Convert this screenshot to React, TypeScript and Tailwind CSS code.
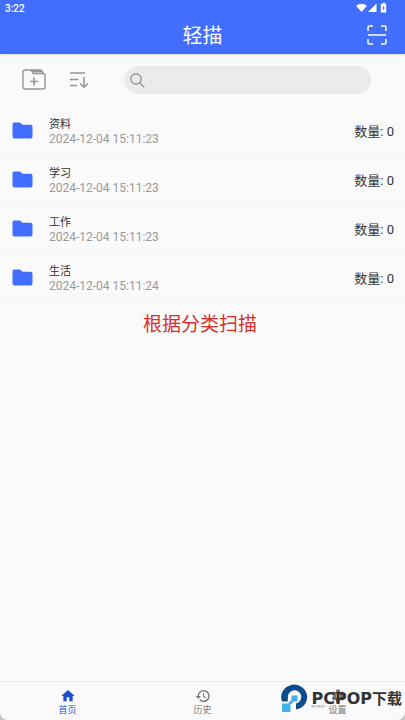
import React from "react";

const folders = [
  { name: "资料", time: "2024-12-04 15:11:23", count: 0 },
  { name: "学习", time: "2024-12-04 15:11:23", count: 0 },
  { name: "工作", time: "2024-12-04 15:11:23", count: 0 },
  { name: "生活", time: "2024-12-04 15:11:24", count: 0 },
];

function StatusIcons() {
  return (
    <svg width="32" height="12" viewBox="0 0 32 12" fill="white" aria-hidden="true">
      <path d="M0 3.800Q5.500-.4 11 3.800L5.500 10z" />
      <path d="M20.500 1.500V10H12z" />
      <path fillRule="evenodd" d="M27 .8h2v1h1.200V10.500h-5.400V1.800H27zM27.900 3.400l-1.700 3h1v2.200l1.700-3h-1z" />
    </svg>
  );
}

function ScanIcon() {
  return (
    <svg width="20" height="20" viewBox="0 0 20 20" fill="none" stroke="white" strokeWidth="1.5" aria-hidden="true">
      <path d="M1 6V2.5Q1 1 2.5 1H6M14 1h3.5Q19 1 19 2.5V6M19 14v3.5q0 1.5-1.5 1.5H14M6 19H2.500Q1 19 1 17.500V14M1 10h18" />
    </svg>
  );
}

function NewFolderIcon() {
  return (
    <svg width="24" height="22" viewBox="0 0 24 22" fill="none" stroke="#949494" strokeWidth="1.4" strokeLinecap="round" strokeLinejoin="round" aria-hidden="true">
      <path d="M1 3q0-2 2-2h6l2 3.500h10q2 0 2 2V18q0 2-2 2H3q-2 0-2-2zM9 1h9.500q1 0 1.500 1l1.500 2.500M11 2.500h8" />
      <path d="M12 9v7M8.500 12.500h7" strokeWidth="1.600" />
    </svg>
  );
}

function SortIcon() {
  return (
    <svg width="20" height="18" viewBox="0 0 20 18" fill="none" stroke="#949494" strokeWidth="1.500" aria-hidden="true">
      <path d="M0 2h15M0 8.500h8.500M0 14.500h7M14 6v10M10 12.500l4 3.700 4-3.700" />
    </svg>
  );
}

function FolderIcon() {
  return (
    <svg className="shrink-0" width="21" height="18" viewBox="0 0 21 18" fill="#426eff" aria-hidden="true">
      <path d="M2 .5h6L10.500 2.700H18.500q2 0 2 2V14.500q0 2-2 2H2.500q-2 0-2-2V2.200Q.5.5 2 .5z" />
    </svg>
  );
}

function GearIcon() {
  return (
    <svg width="16" height="16" viewBox="0 0 24 24" fill="#666" aria-hidden="true">
      <path d="M19.140 12.940c.04-.3.060-.61.060-.94s-.02-.64-.07-.94l2.030-1.580a.49.49 0 0 0 .12-.61l-1.920-3.320a.49.49 0 0 0-.59-.22l-2.390.96a7 7 0 0 0-1.620-.94l-.36-2.540A.48.48 0 0 0 13.920 2.400h-3.840a.48.48 0 0 0-.47.41l-.36 2.540c-.59.24-1.130.57-1.620.94l-2.390-.96a.48.48 0 0 0-.59.220L2.740 8.870a.48.48 0 0 0 .12.610l2.030 1.580a6 6 0 0 0 0 1.880l-2.030 1.580a.49.49 0 0 0-.12.610l1.920 3.320c.12.220.37.290.59.220l2.390-.96c.5.380 1.030.7 1.620.94l.36 2.540c.05.240.24.410.48.410h3.840c.24 0 .44-.17.47-.41l.36-2.540a7 7 0 0 0 1.620-.94l2.390.96c.22.080.47 0 .59-.22l1.920-3.320a.48.48 0 0 0-.12-.61zM12 15.600a3.600 3.600 0 1 1 0-7.200 3.600 3.600 0 0 1 0 7.200z" />
    </svg>
  );
}

function Watermark() {
  return (
    <div className="pointer-events-none absolute right-[3px] bottom-[7px] flex items-start gap-0.5 text-[#333]">
      <svg width="28" height="29" viewBox="0 0 28 29" aria-hidden="true">
        <path d="M1 17.500A13 12.500 0 1 1 15 25.500V19.500A6.700 6.700 0 1 0 7 14.500L6.500 17.500z" fill="#0b4c8c" />
        <path d="M10.500 11.500h6v6h-4L10 20.500H7.500V18.500L10.500 16zM1 19.500h8.500V28H1z" fill="#46aee8" />
      </svg>
      <div className="pt-[5px]">
        <div className="flex items-center leading-5 font-bold">
          <span className="font-['DejaVu_Sans'] text-base leading-5">PCPOP</span>
          <span className="text-[15px] leading-5">下载</span>
        </div>
        <p className="-mt-1 font-['DejaVu_Sans'] text-[4px] leading-[4px] text-[#888]">PCPOP · · · · ·</p>
      </div>
    </div>
  );
}

export default function App() {
  return (
    <div className="min-h-screen bg-[#c4c4c4] font-[Roboto,'Noto_Sans_CJK_SC',sans-serif] text-[#333]">
      <div className="relative flex min-h-screen flex-col overflow-hidden rounded-b-lg bg-[#fafafa]">
        <header className="bg-[#426eff] text-white shadow">
          <div className="flex h-4 items-center justify-between pr-[17px] pl-[5px] text-[10px] font-medium">
            <span>3:22</span>
            <StatusIcons />
          </div>
          <div className="grid h-[38px] grid-cols-3 items-center px-[18px]">
            <h1 className="col-start-2 pt-0.5 text-center text-xl">轻描</h1>
            <button aria-label="扫描" className="justify-self-end">
              <ScanIcon />
            </button>
          </div>
        </header>

        <main className="flex-1">
          <div className="flex h-[52px] items-center pr-[34px] pl-[22px]">
            <button aria-label="新建文件夹"><NewFolderIcon /></button>
            <button aria-label="排序" className="ml-6"><SortIcon /></button>
            <label className="ml-[34px] flex h-7 flex-1 items-center rounded-full bg-[#ebebeb] px-1.5">
              <svg width="15" height="15" viewBox="0 0 15 15" fill="none" stroke="#888" strokeWidth="1.200" aria-hidden="true">
                <circle cx="6" cy="6" r="5.200" />
                <path d="M9.700 9.700l4.600 4.600" />
              </svg>
              <input type="search" aria-label="搜索" className="min-w-0 flex-1 bg-transparent px-2 text-sm outline-none" />
            </label>
          </div>
          <ul className="pt-px">
            {folders.map((folder) => (
              <li key={folder.name} className="flex h-[49px] items-center border-b border-[#f3f3f3] pr-[11px] pl-3">
                <FolderIcon />
                <div className="ml-4 flex-1 pt-0.5">
                  <p className="text-[11px] leading-[14px]">{folder.name}</p>
                  <p className="text-xs leading-[14px] text-[#999]">{folder.time}</p>
                </div>
                <p className="pt-0.5 text-[13px]">数量: {folder.count}</p>
              </li>
            ))}
          </ul>
          <p className="mt-2 pr-[5px] text-center text-[19px] leading-7 text-[#d9302c]">根据分类扫描</p>
        </main>

        <nav className="grid h-[39px] grid-cols-3 border-t border-[#ececec] pt-1.5 text-[9px] leading-3 text-[#777]">
          <button className="flex flex-col items-center text-[#1d4fd0]">
            <svg width="16" height="16" viewBox="0 0 24 24" fill="currentColor" aria-hidden="true"><path d="M10 20v-6h4v6h5v-8h3L12 3 2 12h3v8z" /></svg>
            首页
          </button>
          <button className="flex flex-col items-center">
            <svg width="16" height="16" viewBox="0 0 24 24" fill="currentColor" aria-hidden="true"><path d="M13 3a9 9 0 0 0-9 9H1l4 4 4-4H6a7 7 0 1 1 2.060 4.940l-1.420 1.420A9 9 0 1 0 13 3zm-1 5v5l4.250 2.520.770-1.280-3.520-2.090V8z" /></svg>
            历史
          </button>
          <button className="flex flex-col items-center">
            <GearIcon />
            设置
          </button>
        </nav>
        <Watermark />
      </div>
    </div>
  );
}
